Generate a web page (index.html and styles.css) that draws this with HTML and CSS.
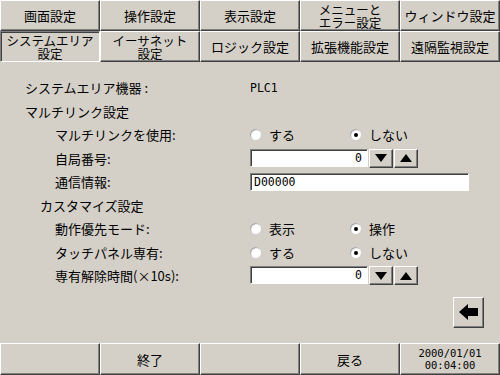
FILE: index.html
```html
<!DOCTYPE html>
<html lang="ja">
<head>
    <meta charset="UTF-8">
    <title>システムエリア設定</title>
    <link rel="stylesheet" href="styles.css">
</head>
<body>

<div class="screen">
    <div class="tabs">
        <div class="tab">画面設定</div>
        <div class="tab">操作設定</div>
        <div class="tab">表示設定</div>
        <div class="tab two">メニューと<br>エラー設定</div>
        <div class="tab">ウィンドウ設定</div>
        <div class="tab two active">システムエリア<br>設定</div>
        <div class="tab two">イーサネット<br>設定</div>
        <div class="tab">ロジック設定</div>
        <div class="tab">拡張機能設定</div>
        <div class="tab">遠隔監視設定</div>
    </div>

    <div class="settings">
        <div class="row">
            <span class="label">システムエリア機器 :</span>
            <span class="mono">PLC1</span>
        </div>
        <div class="row">
            <span class="label">マルチリンク設定</span>
        </div>
        <div class="row">
            <span class="label sub">マルチリンクを使用:</span>
            <div class="choices">
                <span class="choice"><span class="radio"></span>する</span>
                <span class="choice"><span class="radio on"></span>しない</span>
            </div>
        </div>
        <div class="row">
            <span class="label sub">自局番号:</span>
            <div class="spin">
                <span class="field num mono">0</span>
                <span class="btn step"><svg width="12" height="8" viewBox="0 0 12 8"><polygon points="0,0 12,0 6,8"/></svg></span>
                <span class="btn step"><svg width="12" height="8" viewBox="0 0 12 8"><polygon points="0,8 12,8 6,0"/></svg></span>
            </div>
        </div>
        <div class="row">
            <span class="label sub">通信情報:</span>
            <span class="field wide mono">D00000</span>
        </div>
        <div class="row">
            <span class="label group">カスタマイズ設定</span>
        </div>
        <div class="row">
            <span class="label sub">動作優先モード:</span>
            <div class="choices">
                <span class="choice"><span class="radio"></span>表示</span>
                <span class="choice"><span class="radio on"></span>操作</span>
            </div>
        </div>
        <div class="row">
            <span class="label sub">タッチパネル専有:</span>
            <div class="choices">
                <span class="choice"><span class="radio"></span>する</span>
                <span class="choice"><span class="radio on"></span>しない</span>
            </div>
        </div>
        <div class="row">
            <span class="label sub">専有解除時間(×10s):</span>
            <div class="spin">
                <span class="field num mono">0</span>
                <span class="btn step"><svg width="12" height="8" viewBox="0 0 12 8"><polygon points="0,0 12,0 6,8"/></svg></span>
                <span class="btn step"><svg width="12" height="8" viewBox="0 0 12 8"><polygon points="0,8 12,8 6,0"/></svg></span>
            </div>
        </div>
    </div>

    <div class="aside">
        <span class="btn back"><svg width="20" height="16" viewBox="0 0 20 16"><polygon points="0,8 9,0 9,4 19,4 19,12 9,12 9,16"/></svg></span>
    </div>

    <div class="footer">
        <div class="cell"></div>
        <div class="cell">終了</div>
        <div class="cell"></div>
        <div class="cell">戻る</div>
        <div class="cell clock mono">2000/01/01<br>00:04:00</div>
    </div>
</div>

</body>
</html>
```

FILE: styles.css
```css
body {
    margin: 0;
    background: #d4d0c8;
    color: #000;
    font-family: "Noto Sans CJK JP", "Noto Sans", sans-serif;
    font-size: 13px;
}
.screen {
    width: 500px;
    height: 375px;
    display: flex;
    flex-direction: column;
    overflow: hidden;
}
.mono {
    font-family: "DejaVu Sans Mono", "Liberation Mono", monospace;
    font-size: 11.5px;
}
.tabs {
    display: grid;
    grid-template-columns: repeat(5, 100px);
    grid-auto-rows: 31px;
}
.tab {
    display: flex;
    align-items: center;
    justify-content: center;
    text-align: center;
    border: 1px solid;
    border-color: #fff #404040 #404040 #fff;
    box-shadow: inset -1px -1px #808080;
    line-height: 13px;
    white-space: nowrap;
}
.tab.two {
    font-size: 12.5px;
}
.tab.active {
    border-color: #808080 #fff #fff #808080;
    box-shadow: inset 1px 1px #404040;
}
.settings {
    padding: 14px 0 0 25px;
    display: grid;
    grid-auto-rows: 23.5px;
}
.row {
    display: grid;
    grid-template-columns: 225px 1fr;
    align-items: center;
}
.label.sub {
    padding-left: 30px;
}
.label.group {
    padding-left: 15px;
}
.choices {
    display: flex;
}
.choice {
    width: 100px;
    display: flex;
    align-items: center;
    gap: 8px;
}
.radio {
    width: 11px;
    height: 11px;
    border-radius: 50%;
    background: #fff;
    box-shadow: inset 1px 1px 1px #a0a0a0;
    position: relative;
}
.radio.on::after {
    content: "";
    position: absolute;
    left: 4px;
    top: 4px;
    width: 4px;
    height: 4px;
    border-radius: 50%;
    background: #000;
}
.field {
    height: 18px;
    box-sizing: border-box;
    background: #fff;
    border: 1px solid;
    border-color: #808080 #fff #fff #808080;
    box-shadow: inset 1px 1px #404040;
    display: flex;
    align-items: center;
    padding: 0 3px;
}
.field.num {
    width: 118px;
    justify-content: flex-end;
    padding-right: 5px;
}
.field.wide {
    width: 219px;
}
.spin {
    display: flex;
    gap: 1px;
}
.btn {
    box-sizing: border-box;
    display: flex;
    align-items: center;
    justify-content: center;
    background: #d4d0c8;
    border: 1px solid;
    border-color: #fff #404040 #404040 #fff;
    box-shadow: inset -1px -1px #808080;
}
.step {
    width: 24px;
    height: 19px;
}
.aside {
    display: flex;
    justify-content: flex-end;
    padding: 9px 16px 0 0;
}
.back {
    width: 31px;
    height: 31px;
}
.footer {
    margin-top: auto;
    height: 32px;
    display: grid;
    grid-template-columns: repeat(5, 100px);
}
.cell {
    display: flex;
    align-items: center;
    justify-content: center;
    text-align: center;
    border: 1px solid;
    border-color: #fff #404040 #404040 #fff;
    box-shadow: inset -1px -1px #808080;
}
.clock {
    font-size: 10.5px;
    line-height: 12px;
}
```
